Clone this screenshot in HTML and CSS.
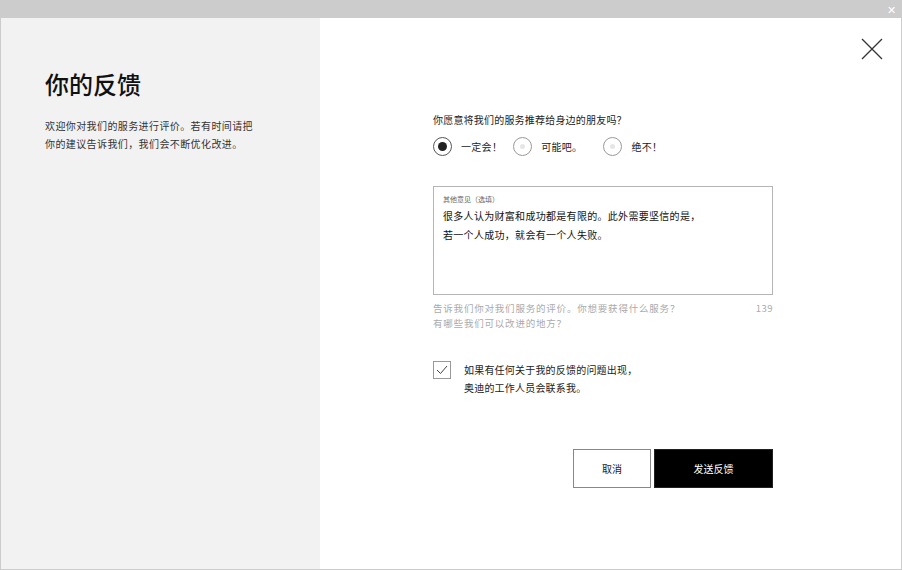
FILE: index.html
```html
<!DOCTYPE html>
<html lang="zh-CN">
<head>
  <meta charset="UTF-8" />
  <title>你的反馈</title>
  <link rel="stylesheet" href="styles.css">
</head>
<body>
  <div class="topbar">
    <span class="top-close">&#x2715;</span>
  </div>
  <div class="window">
    <div class="side">
      <h1>你的反馈</h1>
      <p>欢迎你对我们的服务进行评价。若有时间请把<br>你的建议告诉我们，我们会不断优化改进。</p>
    </div>
    <div class="main">
      <button class="close" aria-label="关闭">
        <svg width="22" height="22" viewBox="0 0 22 22">
          <path d="M1 1 L21 21 M21 1 L1 21" stroke="#333" stroke-width="1.3" fill="none"/>
        </svg>
      </button>
      <div class="form">
        <div class="question">你愿意将我们的服务推荐给身边的朋友吗？</div>
        <div class="radios">
          <label class="radio on"><span class="dot"></span>一定会！</label>
          <label class="radio"><span class="dot"></span>可能吧。</label>
          <label class="radio"><span class="dot"></span>绝不！</label>
        </div>

        <div class="box">
          <div class="box-label">其他意见（选填）</div>
          <div class="box-text">很多人认为财富和成功都是有限的。此外需要坚信的是，<br>若一个人成功，就会有一个人失败。</div>
        </div>
        <div class="hint">
          <span>告诉我们你对我们服务的评价。你想要获得什么服务？<br>有哪些我们可以改进的地方？</span>
          <span class="count">139</span>
        </div>

        <div class="check">
          <span class="checkbox">
            <svg width="12" height="10" viewBox="0 0 12 10">
              <path d="M1 5 L4.5 8.5 L11 1" stroke="#444" stroke-width="1" fill="none"/>
            </svg>
          </span>
          <span>如果有任何关于我的反馈的问题出现，<br>奥迪的工作人员会联系我。</span>
        </div>

        <div class="actions">
          <button class="btn cancel">取消</button>
          <button class="btn send">发送反馈</button>
        </div>
      </div>
    </div>
  </div>
</body>
</html>
```

FILE: styles.css
```css
body {
  margin: 0;
  background: #ccc;
  font-family: "Noto Sans CJK SC", "Noto Sans", sans-serif;
  color: #222;
}

.topbar {
  height: 18px;
  position: relative;
}

.top-close {
  position: absolute;
  right: 6px;
  top: 1px;
  font-size: 11px;
  color: #fff;
}

.window {
  display: flex;
  height: 551px;
  margin: 0 1px;
  border-bottom: 1px solid #ccc;
}

.side {
  width: 319px;
  background: #f2f2f2;
  padding: 0 0 0 44px;
  box-sizing: border-box;
}

.side h1 {
  margin: 51px 0 0;
  font-size: 24px;
  font-weight: 500;
  line-height: 30px;
  color: #111;
}

.side p {
  margin: 18px 0 0;
  font-size: 10px;
  letter-spacing: 0.4px;
  line-height: 18px;
  color: #333;
}

.main {
  flex: 1;
  background: #fff;
  position: relative;
  padding-left: 113px;
}

.close {
  position: absolute;
  right: 18px;
  top: 20px;
  border: none;
  background: none;
  padding: 0;
}

.form {
  width: 340px;
  padding-top: 93px;
}

.question {
  font-size: 10px;
  letter-spacing: 0.2px;
  line-height: 18px;
  color: #222;
}

.radios {
  display: flex;
  margin-top: 8px;
}

.radio {
  display: flex;
  align-items: center;
  font-size: 10px;
  letter-spacing: 0.3px;
  color: #222;
  margin-right: 11px;
}

.radio + .radio {
  margin-right: 21px;
}

.radio .dot {
  width: 19px;
  height: 19px;
  border: 1px solid #999;
  border-radius: 50%;
  margin-right: 9px;
  position: relative;
  box-sizing: border-box;
}

.radio .dot::after {
  content: "";
  position: absolute;
  left: 6px;
  top: 6px;
  width: 5px;
  height: 5px;
  border-radius: 50%;
  background: #e6e6e6;
}

.radio.on .dot {
  border-color: #555;
}

.radio.on .dot::after {
  left: 4px;
  top: 4px;
  width: 9px;
  height: 9px;
  background: #222;
}

.box {
  margin-top: 30px;
  height: 109px;
  border: 1px solid #b5b5b5;
  box-sizing: border-box;
  padding: 7px 9px;
}

.box-label {
  font-size: 7px;
  line-height: 10px;
  color: #666;
}

.box-text {
  font-size: 10px;
  letter-spacing: 0.3px;
  line-height: 19px;
  color: #111;
  margin-top: 2px;
}

.hint {
  display: flex;
  justify-content: space-between;
  font-size: 9.5px;
  line-height: 15px;
  letter-spacing: 0.8px;
  color: #aaa;
  margin-top: 6px;
}

.hint .count {
  letter-spacing: 0.5px;
}

.check {
  display: flex;
  margin-top: 30px;
  font-size: 10px;
  letter-spacing: 0.2px;
  line-height: 18px;
  color: #222;
}

.checkbox {
  width: 18px;
  height: 18px;
  border: 1px solid #999;
  box-sizing: border-box;
  display: flex;
  align-items: center;
  justify-content: center;
  margin-right: 13px;
}

.actions {
  display: flex;
  justify-content: flex-end;
  gap: 3px;
  margin-top: 52px;
}

.btn {
  height: 39px;
  font-family: inherit;
  font-size: 10px;
  cursor: pointer;
}

.cancel {
  width: 78px;
  background: #fff;
  border: 1px solid #888;
  color: #222;
}

.send {
  width: 119px;
  background: #000;
  border: 1px solid #222;
  color: #fff;
}
```
